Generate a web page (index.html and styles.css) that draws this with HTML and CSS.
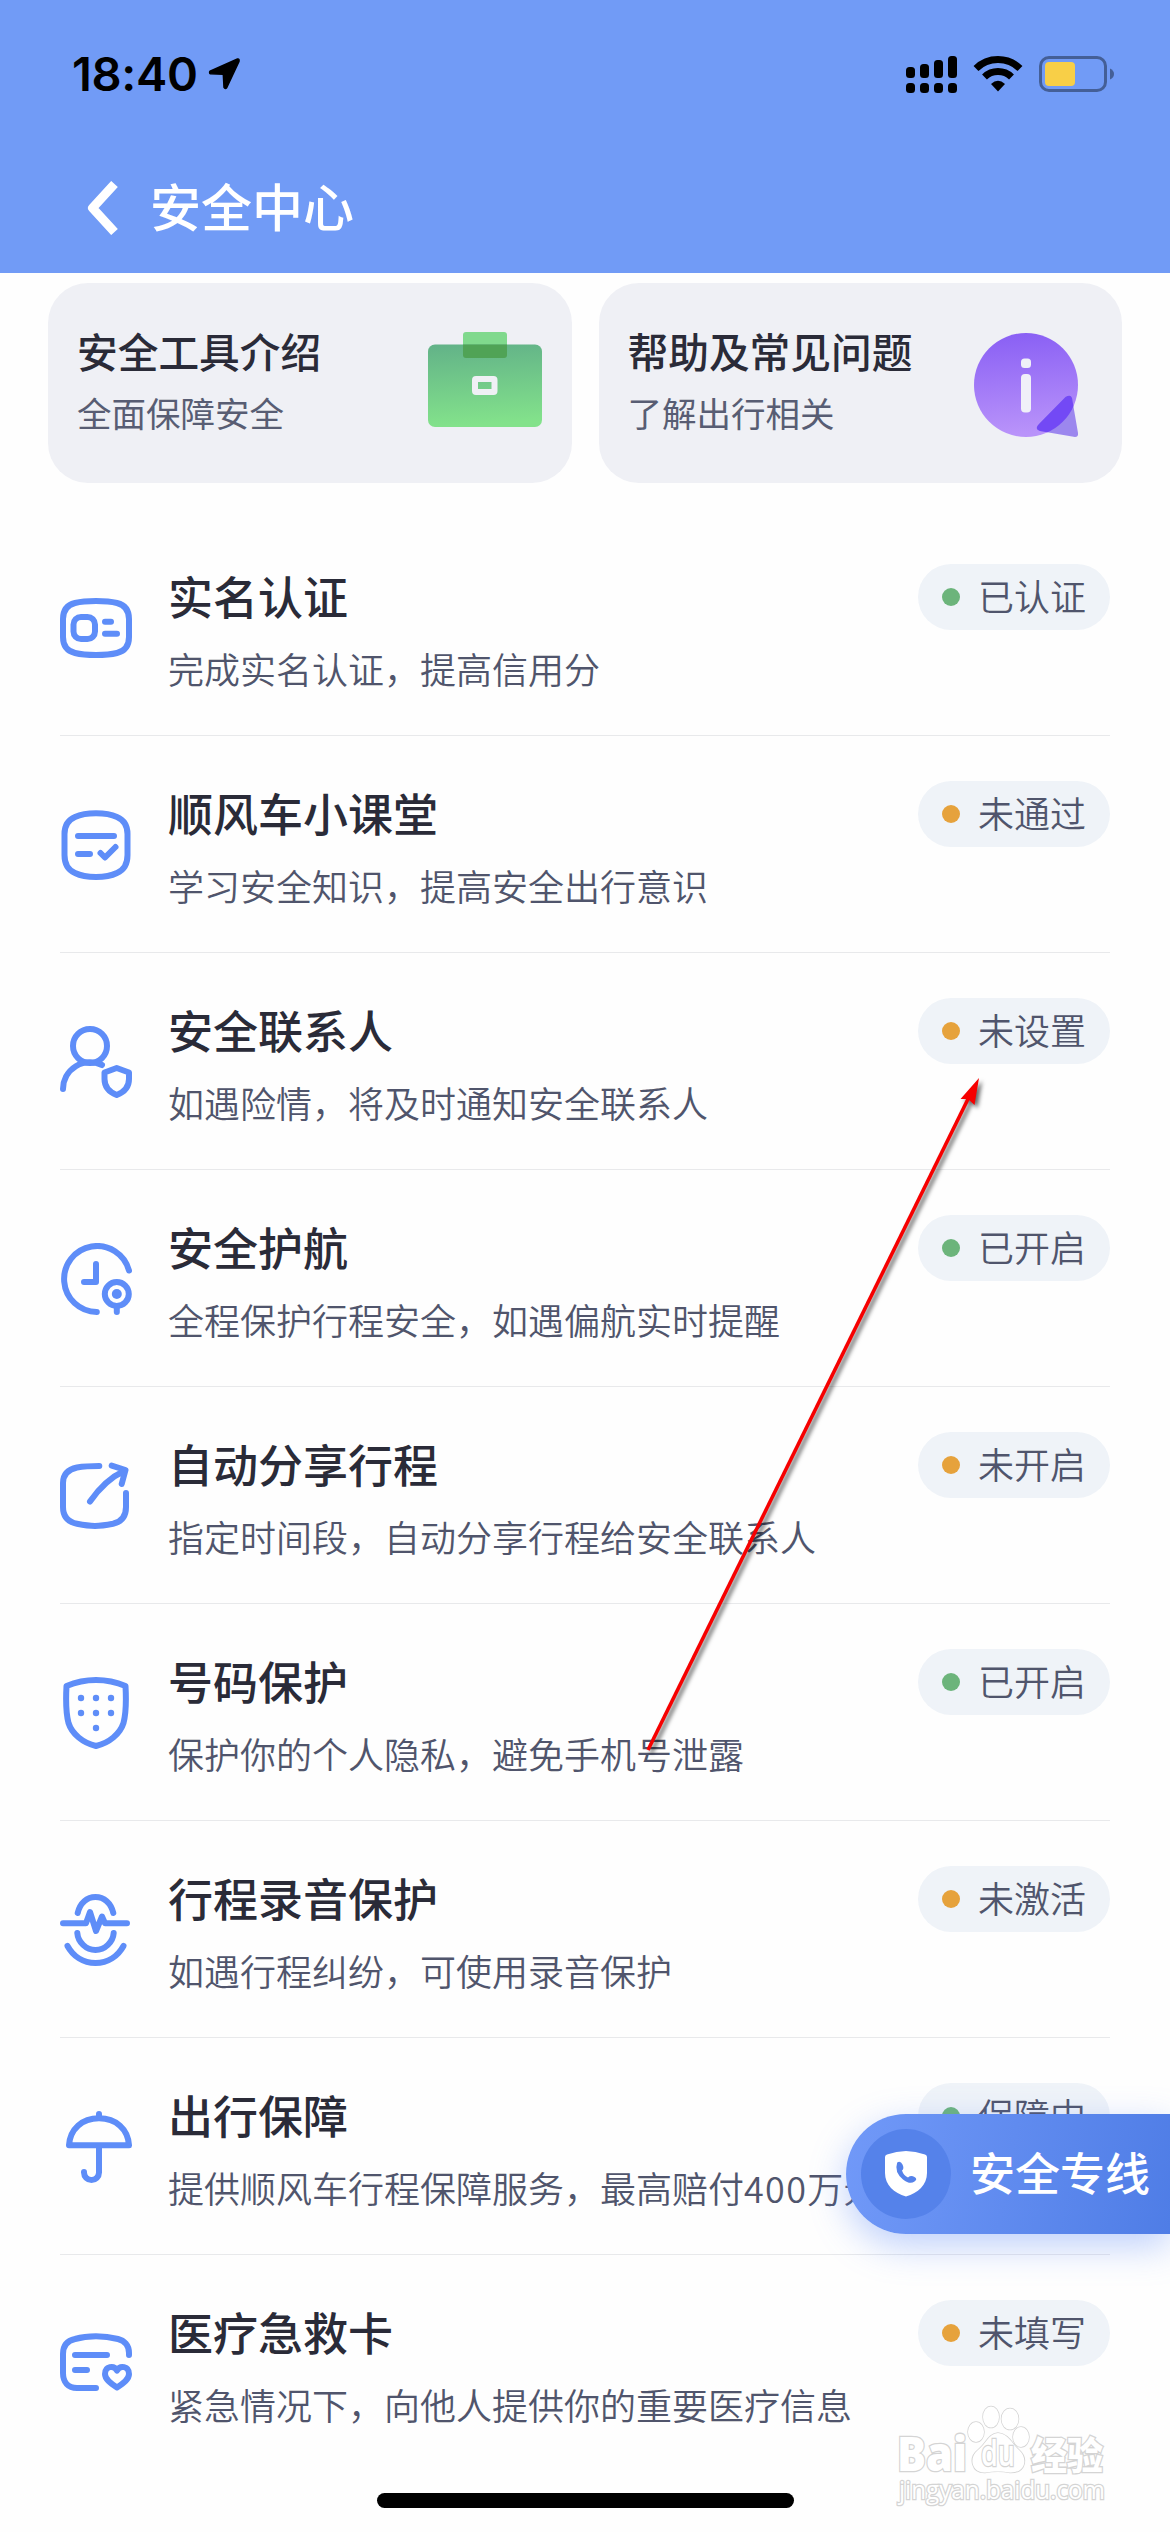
FILE: index.html
```html
<!DOCTYPE html>
<html lang="zh-CN">
<head>
<meta charset="utf-8">
<title>安全中心</title>
<link rel="stylesheet" href="styles.css">
</head>
<body>
<div class="screen">
  <header class="header">
    <div class="status">
      <span class="time">18:40</span>
      <svg class="locate" width="34" height="34" viewBox="0 0 34 34"><path d="M30.500 2 3 14.200Q2 16 3.500 16.800L16.300 17.300 17 30.300Q18.300 32.500 19.800 30.500L32 4.500Q32.500 1.500 30.500 2Z" fill="#000" stroke="#000" stroke-width="1.500" stroke-linejoin="round"/></svg>
      <div class="indicators">
        <svg width="51" height="37" viewBox="0 0 51 37"><rect x="0" y="11" width="9" height="11" rx="3.500"/><rect x="14" y="8" width="9" height="14" rx="3.500"/><rect x="28" y="4" width="9" height="18" rx="3.500"/><rect x="42" y="0" width="9" height="22" rx="3.500"/><rect x="0" y="27" width="9" height="10" rx="3.500"/><rect x="14" y="27" width="9" height="10" rx="3.500"/><rect x="28" y="27" width="9" height="10" rx="3.500"/><rect x="42" y="27" width="9" height="10" rx="3.500"/></svg>
        <svg class="wifi" width="50" height="37" viewBox="0 0 50 37"><path d="M3 13.500A31.500 31.500 0 0 1 47 13.500M11.500 22A19.500 19.500 0 0 1 38.500 22" fill="none" stroke="#000" stroke-width="7"/><path d="M18 29Q25 22.500 32 29L25 36.500Z"/></svg>
        <svg width="76" height="36" viewBox="0 0 76 36"><rect x="1.500" y="1.500" width="65" height="33" rx="8.500" fill="none" stroke="#445f97" stroke-width="3"/><rect x="6" y="6" width="30" height="24" rx="4" fill="#f8cf47"/><path d="M71 12.500Q75 14.500 75 18T71 23.500Z" fill="#445f97"/></svg>
      </div>
    </div>
    <div class="nav">
      <svg width="32" height="54" viewBox="0 0 32 54"><path d="M27.500 3 5.500 27 27.500 51" fill="none" stroke="#fff" stroke-width="9" stroke-linejoin="round"/></svg>
      <h1>安全中心</h1>
    </div>
  </header>

  <section class="cards">
    <div class="card">
      <div class="card-text"><h2>安全工具介绍</h2><p>全面保障安全</p></div>
      <svg class="case" width="114" height="95" viewBox="0 0 114 95">
        <defs><linearGradient id="case-fill" x1="0" y1="0" x2="0.080" y2="1"><stop offset="0" stop-color="#62b288"/><stop offset="1" stop-color="#83e28b"/></linearGradient></defs>
        <rect x="35" y="0" width="44" height="26" rx="3" fill="#80d98d"/><rect y="12.500" width="114" height="82.500" rx="7" fill="url(#case-fill)"/><path d="M35 12.500H79V23Q79 26 76 26H38Q35 26 35 23Z" fill="#50a356"/><rect x="47" y="47" width="19.500" height="13" rx="1" fill="none" stroke="#eff0f5" stroke-width="6" stroke-linejoin="round"/>
      </svg>
    </div>
    <div class="card">
      <div class="card-text"><h2>帮助及常见问题</h2><p>了解出行相关</p></div>
      <svg class="info" width="105" height="105" viewBox="0 0 105 105">
        <defs><linearGradient id="info-fill" x1="0" y1="0" x2="0.080" y2="1"><stop offset="0" stop-color="#885ef4"/><stop offset="1" stop-color="#b993fa"/></linearGradient><clipPath id="info-disc"><circle cx="52" cy="52" r="52"/></clipPath></defs>
        <circle cx="52" cy="52" r="52" fill="url(#info-fill)"/>
        <path d="M91.500 64Q98 60 98.500 68L104 100Q104.500 104 101 104L66 98Q60 96 65 91Z" fill="#9c87ee"/>
        <path d="M91.500 64Q98 60 98.500 68L104 100Q104.500 104 101 104L66 98Q60 96 65 91Z" fill="#7349f5" clip-path="url(#info-disc)"/>
        <rect x="47" y="25.500" width="10" height="9.500" rx="3.500" fill="#f0f0f8"/><rect x="47" y="41" width="10" height="38.500" rx="4" fill="#f0f0f8"/>
      </svg>
    </div>
  </section>

  <main class="list">
    <div class="item">
      <svg class="icon" viewBox="0 0 72 72"><path d="M36 9C28 9 21 9.500 15 11 7 13 3 19 3 27V45C3 53 7 59 15 61 21 62.500 28 63 36 63 44 63 51 62.500 57 61 65 59 69 53 69 45V27C69 19 65 13 57 11 51 9.500 44 9 36 9Z"/><rect x="13.500" y="25" width="21.500" height="22" rx="7.500"/><path d="M45 29.800H51M45 41.800H57"/></svg>
      <div class="text"><h3>实名认证</h3><p>完成实名认证，提高信用分</p></div>
      <span class="badge ok">已认证</span>
    </div>
    <div class="item">
      <svg class="icon" viewBox="0 0 72 72"><path d="M36 4.300C28 4.300 20.500 5.500 15 8 8 11 4.500 17 4.500 25V46C4.500 55 8 61 15 64 20.500 66.700 28 68 36 68 44 68 51.500 66.700 57 64 64 61 67.500 55 67.500 46V25C67.500 17 64 11 57 8 51.500 5.500 44 4.300 36 4.300Z"/><path d="M18 27H54M18 45H30M40.500 44 45 48.500 55.500 38"/></svg>
      <div class="text"><h3>顺风车小课堂</h3><p>学习安全知识，提高安全出行意识</p></div>
      <span class="badge warn">未通过</span>
    </div>
    <div class="item">
      <svg class="icon" viewBox="0 0 72 72"><circle cx="30" cy="20" r="17"/><path d="M3 63A27 27 0 0 1 42 39M56.700 42 69 46.500V53C69 61 64.500 66 56.700 69 49 66 44.500 61 44.500 53V46.500Z"/></svg>
      <div class="text"><h3>安全联系人</h3><p>如遇险情，将及时通知安全联系人</p></div>
      <span class="badge warn">未设置</span>
    </div>
    <div class="item">
      <svg class="icon" viewBox="0 0 72 72"><path d="M69 27.500A33 33 0 1 0 36.800 69M36 21V39H24"/><circle cx="56.800" cy="51" r="12"/><circle class="solid" cx="56.800" cy="51" r="5"/><path d="M56.800 63V69"/></svg>
      <div class="text"><h3>安全护航</h3><p>全程保护行程安全，如遇偏航实时提醒</p></div>
      <span class="badge ok">已开启</span>
    </div>
    <div class="item">
      <svg class="icon" viewBox="0 0 72 72"><path d="M39.300 6C30 6 24 6.300 17 7.500 8 9.500 3 14 3 23V47C3 57 8 62 17 63.800 24 65.200 28 66 35 66 42 66 46 65.200 53 63.800 61 62 66 57 66 47V33M30 41.500C38 30 49 18 64 11M51.700 5.700 65.500 10 61.700 24"/></svg>
      <div class="text"><h3>自动分享行程</h3><p>指定时间段，自动分享行程给安全联系人</p></div>
      <span class="badge warn">未开启</span>
    </div>
    <div class="item">
      <svg class="icon" viewBox="0 0 72 72"><path d="M6.500 9C16 5 26 3 36 3 46 3 56 5 65.500 9 66.200 22 66.200 36 63.500 46 60 57 49 66 36 69 23 66 12 57 8.500 46 5.800 36 5.800 22 6.500 9Z"/><g class="solid"><circle cx="21" cy="21" r="3.200"/><circle cx="36" cy="21" r="3.200"/><circle cx="51" cy="21" r="3.200"/><circle cx="21" cy="36" r="3.200"/><circle cx="36" cy="36" r="3.200"/><circle cx="51" cy="36" r="3.200"/><circle cx="36" cy="51" r="3.200"/></g></svg>
      <div class="text"><h3>号码保护</h3><p>保护你的个人隐私，避免手机号泄露</p></div>
      <span class="badge ok">已开启</span>
    </div>
    <div class="item">
      <svg class="icon" viewBox="0 0 72 72"><path d="M17.700 19C20 9 27 3 35.500 3 44 3 51 9 53.300 19M3 29.300H26L30 18 36 37 42 22.500 45 29.300H67M17.300 39C18 48 26 56 35.500 56 45 56 53 48 53.700 39M7.500 52C13 62 23 69 35.500 69 48 69 58 62 63.500 52"/></svg>
      <div class="text"><h3>行程录音保护</h3><p>如遇行程纠纷，可使用录音保护</p></div>
      <span class="badge warn">未激活</span>
    </div>
    <div class="item">
      <svg class="icon" viewBox="0 0 72 72"><path d="M9 34.300C10 18 22 7.300 39 7.300 56 7.300 68 18 69 34.300ZM39 3V7M39 35V61.500A7.500 7.500 0 0 1 24 61.500V61"/></svg>
      <div class="text"><h3>出行保障</h3><p>提供顺风车行程保障服务，最高赔付<span class="amount">400</span>万元</p></div>
      <span class="badge ok">保障中</span>
    </div>
    <div class="item">
      <svg class="icon" viewBox="0 0 72 72"><path d="M69 27V25C69 17 64 12.500 58 11 50 9 44 8.300 36 8.300 28 8.300 22 9 15 11 8 12.500 3 17 3 26V45C3 54 8 60 17 60H36M15 27H47M15 42H27M57 42.500C54 37 45 38 45 46 45 51 50 55 57 59.500 64 55 69 51 69 46 69 38 60 37 57 42.500Z"/></svg>
      <div class="text"><h3>医疗急救卡</h3><p>紧急情况下，向他人提供你的重要医疗信息</p></div>
      <span class="badge warn">未填写</span>
    </div>
  </main>

  <div class="hotline">
    <span class="hotline-icon"><svg width="42" height="46" viewBox="0 0 42 46"><path d="M0 6Q0 4 2 3.500Q21-3.500 40 3.500Q42 4 42 6V22C42 34 33 42 21 45.500C9 42 0 34 0 22Z" fill="#fff"/><path d="M12.200 11.500Q15.500 9.500 17.500 13.500T17 19.500Q18.500 24.500 23 26.500Q26 23.800 29.500 26T29.500 30.500Q25 34 18 28.500Q9 21 12.200 11.500Z" fill="#5582ea"/></svg></span>
    <span>安全专线</span>
  </div>

  <svg class="pointer" width="360" height="700" viewBox="0 0 360 700"><path d="M18 682 339 29" stroke="#f60000" stroke-width="3.600"/><path d="M349 10 330.500 31 338 31 344.500 37Z" fill="#f60000"/></svg>

  <svg class="watermark" width="240" height="126" viewBox="0 0 240 126">
    <g class="mark">
      <text class="brand" x="7" y="67" textLength="70" lengthAdjust="spacingAndGlyphs">Bai</text>
      <ellipse cx="86" cy="28" rx="8" ry="10"/><ellipse cx="101" cy="13" rx="8" ry="10.500"/><ellipse cx="120" cy="15" rx="8.500" ry="10.500"/><ellipse cx="131" cy="33" rx="8" ry="10"/>
      <path d="M108 29C98 30 96 40 88 46 78 54 82 69 95 68.500 103 67 113 67 120 68.500 136 69 138 54 129 46 122 40 119 30 108 29Z"/>
      <text class="du" x="91" y="62" textLength="34" lengthAdjust="spacingAndGlyphs">du</text>
      <text class="cn" x="141" y="65" textLength="72" lengthAdjust="spacingAndGlyphs">经验</text>
    </g>
    <text class="site" x="9" y="95" textLength="206" lengthAdjust="spacingAndGlyphs">jingyan.baidu.com</text>
  </svg>
  <div class="home-bar"></div>
</div>
</body>
</html>
```

FILE: styles.css
```css
* { box-sizing: border-box; margin: 0; padding: 0; }

body { background: #fefefe; }

.screen {
  position: relative;
  width: 1170px;
  height: 2532px;
  overflow: hidden;
  background: #fefefe;
  font-family: "Noto Sans CJK SC", sans-serif;
  color: #2a2b38;
}

svg { display: block; flex: none; }

.header { height: 273px; background: #719bf6; }

.status {
  display: flex;
  align-items: center;
  height: 148px;
  padding: 0 55px 0 72px;
}

.time {
  width: 135px;
  font: 600 47px/60px Inter, sans-serif;
  letter-spacing: -0.3px;
  color: #000;
}

.indicators {
  display: flex;
  align-items: center;
  gap: 16px;
  margin-left: auto;
}

.wifi { margin-top: -2px; }

.nav {
  display: flex;
  align-items: center;
  gap: 31px;
  height: 120px;
  padding-left: 87px;
}

.nav h1 {
  padding-bottom: 6px;
  font-size: 51px;
  font-weight: 500;
  line-height: 66px;
  color: #fff;
}

.cards {
  display: grid;
  grid-template-columns: 1fr 1fr;
  gap: 27px;
  padding: 10px 48px 36px;
}

.card {
  display: flex;
  justify-content: space-between;
  height: 200px;
  padding: 41px 30px 0 29px;
  border-radius: 40px;
  background: #eff0f5;
}

.card h2 {
  font-size: 40.7px;
  font-weight: 500;
  line-height: 54px;
}

.card p {
  margin-top: 11px;
  font-size: 34.5px;
  line-height: 46px;
  color: #585d73;
}

.case { margin-top: 8px; }
.info { margin: 9px 13px 0 0; }

.list { padding: 0 60px; }

.item {
  display: grid;
  grid-template-columns: 72px 1fr 192px;
  column-gap: 36px;
  align-items: start;
  height: 217px;
  padding-top: 45px;
  border-bottom: 1px solid #e8e9eb;
}

.item:last-child { border-bottom: 0; }

.icon {
  width: 72px;
  height: 72px;
  margin-top: 28px;
  fill: none;
  stroke: #5e8df8;
  stroke-width: 6;
  stroke-linecap: round;
  stroke-linejoin: round;
}

.icon .solid { fill: #5e8df8; stroke: none; }

.text { min-width: 0; white-space: nowrap; }

.text h3 {
  margin-top: 2px;
  font-size: 45px;
  font-weight: 500;
  line-height: 60px;
}

.text p {
  margin-top: 15px;
  font-size: 36px;
  font-weight: 350;
  line-height: 54px;
  color: #50556c;
}

.amount { letter-spacing: 1.3px; }

.badge {
  display: flex;
  align-items: flex-start;
  gap: 18px;
  height: 66px;
  padding: 0 24px;
  border-radius: 33px;
  background: #eff3f8;
  font-size: 36px;
  font-weight: 350;
  line-height: 62px;
  white-space: nowrap;
  color: #50556c;
}

.badge::before {
  content: "";
  width: 18px;
  height: 18px;
  margin-top: 24px;
  border-radius: 50%;
}

.badge.ok::before { background: #6cb47b; }
.badge.warn::before { background: #e6a23c; }

.hotline {
  position: absolute;
  top: 2114px;
  right: 0;
  display: flex;
  align-items: center;
  gap: 19px;
  width: 324px;
  height: 120px;
  padding-left: 15px;
  border-radius: 60px 0 0 60px;
  background: linear-gradient(100deg, #7199f8, #4f7de6);
  box-shadow: 0 12px 36px rgba(94, 141, 248, 0.4);
  font-size: 45px;
  font-weight: 500;
  line-height: 60px;
  white-space: nowrap;
  color: #fff;
}

.hotline-icon {
  display: grid;
  place-items: center;
  width: 90px;
  height: 90px;
  border-radius: 50%;
  background: #5582ea;
}

.hotline > span:last-child { padding-bottom: 5px; }

.pointer {
  position: absolute;
  left: 630px;
  top: 1068px;
  filter: drop-shadow(3px 3px 2px rgba(0, 0, 0, 0.6));
}

.watermark { position: absolute; left: 890px; top: 2404px; overflow: visible; }

.mark, .site {
  fill: #fff;
  stroke: #d4d4d4;
  stroke-width: 1.5;
  paint-order: stroke;
}

.mark text, .site { stroke-width: 2.6; }
.brand { font: 800 47px "Open Sans", sans-serif; }
.du { font: 600 36px "Open Sans", sans-serif; }
.cn { font: 900 38px "Noto Sans CJK SC", sans-serif; }
.site { font: 400 26px "Open Sans", sans-serif; }

.home-bar {
  position: absolute;
  left: 377px;
  top: 2493px;
  width: 417px;
  height: 15px;
  border-radius: 8px;
  background: #000;
}
```
